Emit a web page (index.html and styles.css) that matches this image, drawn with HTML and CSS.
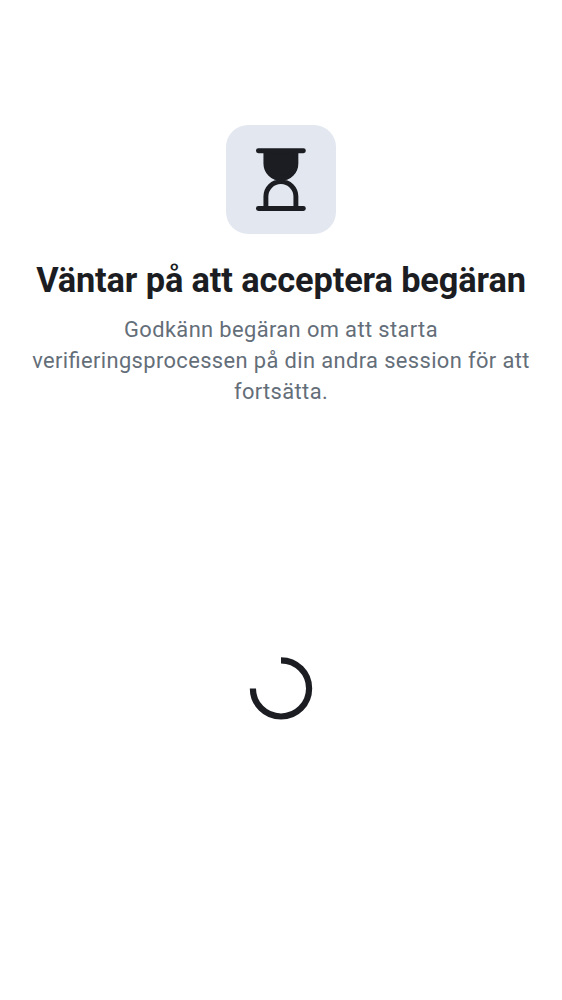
FILE: index.html
```html
<!DOCTYPE html>
<html lang="sv">
<head>
<meta charset="utf-8">
<title>Verifiering</title>
<link rel="stylesheet" href="styles.css">
</head>
<body>
<main class="screen">
  <div class="badge">
    <svg class="hourglass" viewBox="0 0 109.4 109.4" aria-hidden="true">
      <path class="fill" d="M38 26H72V38C72 48 64 55.5 54.9 55.5S38 48 38 38Z"/>
      <path class="line" d="M32.4 25.7H77.4M32.4 83.5H77.4M39.9 26V38.5A15 15 0 0 0 69.9 38.5V26M39.9 83V71.6A15 15 0 0 1 69.9 71.6V83"/>
    </svg>
  </div>
  <h1 class="title">Väntar på att acceptera begäran</h1>
  <p class="message">Godkänn begäran om att starta<br>verifieringsprocessen på din andra session för att<br>fortsätta.</p>
  <svg class="spinner" viewBox="0 0 64 64" role="status">
    <path d="M32 4.3A28.1 28.1 0 1 1 3.9 32.4"/>
  </svg>
</main>
</body>
</html>
```

FILE: styles.css
```css
body {
  margin: 0;
  background: #fff;
  font-family: Roboto, sans-serif;
}
.screen {
  display: flex;
  flex-direction: column;
  align-items: center;
  box-sizing: border-box;
  height: 1000px;
  padding-top: 125px;
  text-align: center;
}
.badge {
  width: 109.4px;
  height: 109.4px;
  border-radius: 22px;
  background: #e3e8f0;
}
.hourglass {
  display: block;
}
.fill {
  fill: #1b1d22;
}
.line {
  fill: none;
  stroke: #1b1d22;
  stroke-width: 4.9;
  stroke-linecap: round;
}
.title {
  margin: 25px 0 0;
  color: #1b1d22;
  font-size: 34.375px;
  font-weight: 700;
  letter-spacing: -0.13px;
  line-height: 43px;
  white-space: nowrap;
}
.message {
  margin: 11.4px 0 0;
  color: #646e79;
  font-size: 21.875px;
  font-feature-settings: "liga" 1;
  letter-spacing: 0.39px;
  line-height: 31.25px;
  white-space: nowrap;
}
.spinner {
  width: 64px;
  height: 64px;
  margin-top: 248.9px;
}
.spinner path {
  fill: none;
  stroke: #1b1d22;
  stroke-width: 6.2;
}
```
